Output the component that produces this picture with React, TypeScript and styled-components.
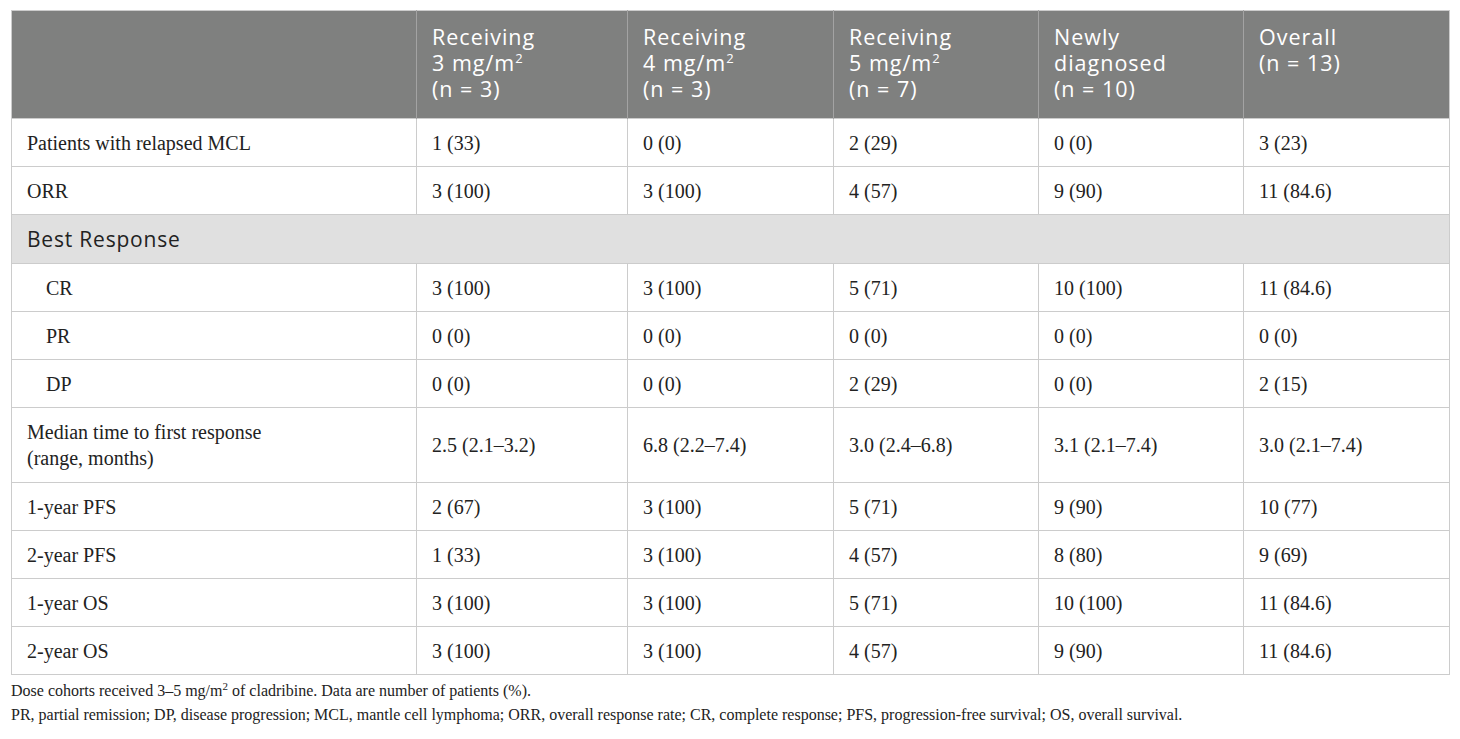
import type { ReactElement } from 'react';
import styled, { createGlobalStyle } from 'styled-components';

const GlobalStyle = createGlobalStyle`
	html, body {
		margin: 0;
		padding: 0;
		background: #ffffff;
	}
`;

const Page = styled.div`
	padding: 10px 11px 0 11px;
	width: 1438px;
`;

const Table = styled.table`
	width: 1438px;
	border-collapse: collapse;
	table-layout: fixed;
	border: 1px solid #cccccc;
`;

const HeadCell = styled.th`
	background: #7f807f;
	color: #ffffff;
	font-family: 'Open Sans', 'Noto Sans', sans-serif;
	font-weight: 400;
	font-size: 21.5px;
	letter-spacing: 1px;
	line-height: 26px;
	text-align: left;
	vertical-align: top;
	padding: 13px 15px 16px 15px;
	border-left: 1px solid #a3a3a3;

	&:first-child {
		border-left: none;
	}

	sup {
		font-size: 13px;
		letter-spacing: 0;
		line-height: 0;
		vertical-align: 8px;
	}
`;

const Cell = styled.td<{ $indent?: boolean; $multi?: boolean }>`
	font-family: 'Liberation Serif', 'Times New Roman', serif;
	font-size: 20px;
	line-height: 26px;
	color: #222222;
	vertical-align: middle;
	padding: 11px 15px ${(p) => (p.$multi ? '11px' : '10px')} ${(p) => (p.$indent ? '34px' : '15px')};
	border: 1px solid #cccccc;
`;

const SectionCell = styled.td`
	background: #e0e0e0;
	font-family: 'Open Sans', 'Noto Sans', sans-serif;
	font-size: 21px;
	letter-spacing: 0.8px;
	line-height: 26px;
	color: #222222;
	padding: 11px 15px 11px 15px;
	border: 1px solid #cccccc;
`;

const Notes = styled.div`
	padding: 4px 0 0 0;
	font-family: 'Liberation Serif', 'Times New Roman', serif;
	font-size: 16px;
	line-height: 24px;
	color: #222222;

	sup {
		font-size: 11px;
		line-height: 0;
		vertical-align: 6px;
	}
`;

const widths = [405, 211, 206, 205, 205, 206];

interface Row {
	label: string;
	values: string[];
	indent?: boolean;
	lines?: string[];
	section?: boolean;
}

const rows: Row[] = [
	{ label: 'Patients with relapsed MCL', values: ['1 (33)', '0 (0)', '2 (29)', '0 (0)', '3 (23)'] },
	{ label: 'ORR', values: ['3 (100)', '3 (100)', '4 (57)', '9 (90)', '11 (84.6)'] },
	{ label: 'Best Response', values: [], section: true },
	{ label: 'CR', values: ['3 (100)', '3 (100)', '5 (71)', '10 (100)', '11 (84.6)'], indent: true },
	{ label: 'PR', values: ['0 (0)', '0 (0)', '0 (0)', '0 (0)', '0 (0)'], indent: true },
	{ label: 'DP', values: ['0 (0)', '0 (0)', '2 (29)', '0 (0)', '2 (15)'], indent: true },
	{
		label: 'Median time to first response',
		lines: ['Median time to first response', '(range, months)'],
		values: ['2.5 (2.1–3.2)', '6.8 (2.2–7.4)', '3.0 (2.4–6.8)', '3.1 (2.1–7.4)', '3.0 (2.1–7.4)'],
	},
	{ label: '1-year PFS', values: ['2 (67)', '3 (100)', '5 (71)', '9 (90)', '10 (77)'] },
	{ label: '2-year PFS', values: ['1 (33)', '3 (100)', '4 (57)', '8 (80)', '9 (69)'] },
	{ label: '1-year OS', values: ['3 (100)', '3 (100)', '5 (71)', '10 (100)', '11 (84.6)'] },
	{ label: '2-year OS', values: ['3 (100)', '3 (100)', '4 (57)', '9 (90)', '11 (84.6)'] },
];

export default function App(): ReactElement {
	return (
		<Page>
			<GlobalStyle />
			<Table>
				<colgroup>
					{widths.map((w, i) => (
						<col key={i} style={{ width: w }} />
					))}
				</colgroup>
				<thead>
					<tr>
						<HeadCell />
						<HeadCell>
							Receiving
							<br />3 mg/m<sup>2</sup>
							<br />
							(n = 3)
						</HeadCell>
						<HeadCell>
							Receiving
							<br />4 mg/m<sup>2</sup>
							<br />
							(n = 3)
						</HeadCell>
						<HeadCell>
							Receiving
							<br />5 mg/m<sup>2</sup>
							<br />
							(n = 7)
						</HeadCell>
						<HeadCell>
							Newly
							<br />
							diagnosed
							<br />
							(n = 10)
						</HeadCell>
						<HeadCell>
							Overall
							<br />
							(n = 13)
						</HeadCell>
					</tr>
				</thead>
				<tbody>
					{rows.map((row) =>
						row.section ? (
							<tr key={row.label}>
								<SectionCell colSpan={6}>{row.label}</SectionCell>
							</tr>
						) : (
							<tr key={row.label}>
								<Cell $indent={row.indent} $multi={!!row.lines}>
									{row.lines
										? row.lines.map((l, i) => (
												<div key={i}>{l}</div>
											))
										: row.label}
								</Cell>
								{row.values.map((v, i) => (
									<Cell key={i} $multi={!!row.lines}>
										{v}
									</Cell>
								))}
							</tr>
						),
					)}
				</tbody>
			</Table>
			<Notes>
				<div>
					Dose cohorts received 3–5 mg/m<sup>2</sup> of cladribine. Data are number of patients (%).
				</div>
				<div>
					PR, partial remission; DP, disease progression; MCL, mantle cell lymphoma; ORR, overall response
					rate; CR, complete response; PFS, progression-free survival; OS, overall survival.
				</div>
			</Notes>
		</Page>
	);
}
